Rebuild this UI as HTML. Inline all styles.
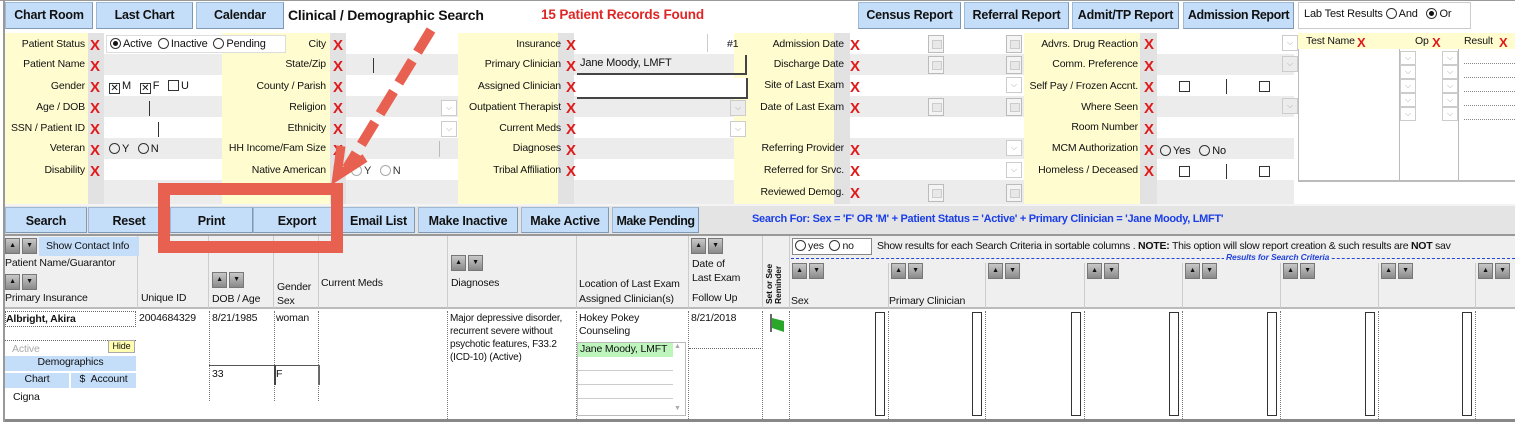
<!DOCTYPE html>
<html><head><meta charset="utf-8"><style>
*{box-sizing:border-box;margin:0;padding:0}
body{width:1515px;height:422px;overflow:hidden;background:#fff;font-family:"Liberation Sans",Arial,sans-serif;font-size:10.5px;letter-spacing:-0.15px;color:#111;position:relative;white-space:nowrap}
.a{position:absolute}
.btn{position:absolute;background:#c4defa;border:1px solid #9fb8d4;border-right-color:#7f98b4;border-bottom-color:#7f98b4;font-weight:bold;font-size:12.5px;letter-spacing:-0.2px;text-align:center;color:#111;white-space:nowrap;overflow:hidden}
.lab{position:absolute;background:#fffdd0}
.xs{position:absolute;background:#e2e2e2}
.l{position:absolute;text-align:right;font-size:10.5px}
.x{position:absolute;color:#e01a1a;font-weight:bold;font-size:15px;line-height:15px}
.rad{display:inline-block;width:11px;height:11px;border:1px solid #333;border-radius:50%;vertical-align:-2px;margin-right:2px;position:relative}
.rad.on::after{content:"";position:absolute;left:2px;top:2px;width:5px;height:5px;border-radius:50%;background:#111}
.cb{display:inline-block;width:11px;height:11px;border:1px solid #333;vertical-align:-2px;margin-right:2px;font-size:10px;line-height:9px;text-align:center}
.dd{position:absolute;width:16px;height:16px;border:1px solid #ccc;background:#fff;color:#aaa;font-size:8px;text-align:center;line-height:14px}
.cal{position:absolute;width:16px;height:18px;border:1px solid #bbb;background:#f4f4f4}
.cal::after{content:"";position:absolute;left:3px;top:4px;width:8px;height:7px;border:1px solid #ccc;background:#e8e8e8}
.ar{position:absolute;width:15px;height:16px;background:linear-gradient(#c8c8c8,#8a8a8a);border:1px solid #777;color:#111;font-size:7px;text-align:center;line-height:14px}
.h{position:absolute;font-size:10.5px;color:#111}
.vl{position:absolute;border-left:1px solid #ccc}
.sb{position:absolute;width:10px;border:1px solid #333;background:#fff}
</style></head><body>
<!-- top bar -->
<div class="a" style="left:0;top:0;width:1515px;height:32px;background:#fff;border-top:1px solid #999"></div>
<div class="a" style="left:3px;top:0;width:2px;height:422px;background:#999"></div>
<div class="btn" style="left:5px;top:2px;width:88px;height:27px;line-height:25px">Chart Room</div>
<div class="btn" style="left:96px;top:2px;width:97px;height:27px;line-height:25px">Last Chart</div>
<div class="btn" style="left:196px;top:2px;width:88px;height:27px;line-height:25px">Calendar</div>
<div class="a" style="left:288px;top:7px;font-size:14px;font-weight:bold;letter-spacing:-0.2px">Clinical / Demographic Search</div>
<div class="a" style="left:541px;top:7px;font-size:13.5px;font-weight:bold;color:#e02525">15 Patient Records Found</div>
<div class="btn" style="left:858px;top:2px;width:103px;height:27px;line-height:25px">Census Report</div>
<div class="btn" style="left:964px;top:2px;width:105px;height:27px;line-height:25px">Referral Report</div>
<div class="btn" style="left:1072px;top:2px;width:107px;height:27px;line-height:25px">Admit/TP Report</div>
<div class="btn" style="left:1183px;top:2px;width:111px;height:27px;line-height:25px;letter-spacing:-0.4px">Admission Report</div>
<div class="a" style="left:1298px;top:2px;width:173px;height:27px;border:1px solid #ccc;padding:5px 0 0 5px;font-size:11px">Lab Test Results <span class="rad"></span>And &nbsp;&nbsp;<span class="rad on"></span>Or</div>

<!-- form rows -->
<div class="a" style="left:104px;top:33px;width:1190px;height:21px;background:#fff"></div>
<div class="a" style="left:104px;top:54px;width:1190px;height:21px;background:#ececec"></div>
<div class="a" style="left:104px;top:75px;width:1190px;height:21px;background:#fff"></div>
<div class="a" style="left:104px;top:96px;width:1190px;height:21px;background:#ececec"></div>
<div class="a" style="left:104px;top:117px;width:1190px;height:21px;background:#fff"></div>
<div class="a" style="left:104px;top:138px;width:1190px;height:21px;background:#ececec"></div>
<div class="a" style="left:104px;top:159px;width:1190px;height:21px;background:#fff"></div>
<div class="a" style="left:104px;top:180px;width:1190px;height:24px;background:#ececec"></div>

<div class="lab" style="left:5px;top:33px;width:83px;height:171px"></div>
<div class="xs" style="left:88px;top:33px;width:16px;height:171px"></div>
<div class="lab" style="left:222px;top:33px;width:108px;height:171px"></div>
<div class="xs" style="left:330px;top:33px;width:16px;height:171px"></div>
<div class="lab" style="left:458px;top:33px;width:100px;height:171px"></div>
<div class="xs" style="left:558px;top:33px;width:16px;height:171px"></div>
<div class="lab" style="left:734px;top:33px;width:100px;height:171px"></div>
<div class="xs" style="left:834px;top:33px;width:16px;height:171px"></div>
<div class="lab" style="left:1024px;top:33px;width:116px;height:171px"></div>
<div class="xs" style="left:1140px;top:33px;width:17px;height:171px"></div>
<div class="a" style="left:1295px;top:33px;width:220px;height:171px;background:#fff"></div>

<!-- col1 labels -->
<div class="l" style="left:5px;width:80px;top:38px">Patient Status</div>
<div class="l" style="left:5px;width:80px;top:58px">Patient Name</div>
<div class="l" style="left:5px;width:80px;top:80px">Gender</div>
<div class="l" style="left:5px;width:80px;top:101px">Age / DOB</div>
<div class="l" style="left:5px;width:80px;top:122px">SSN / Patient ID</div>
<div class="l" style="left:5px;width:80px;top:142px">Veteran</div>
<div class="l" style="left:5px;width:80px;top:164px">Disability</div>
<div class="x" style="left:90px;top:38px">X</div><div class="x" style="left:90px;top:59px">X</div><div class="x" style="left:90px;top:80px">X</div><div class="x" style="left:90px;top:101px">X</div><div class="x" style="left:90px;top:122px">X</div><div class="x" style="left:90px;top:143px">X</div><div class="x" style="left:90px;top:164px">X</div>
<div class="a" style="left:106px;top:35px;width:180px;height:18px;background:#fff;border:1px solid #ddd;padding:2px 3px;font-size:11px"><span class="rad on"></span>Active &nbsp;<span class="rad"></span>Inactive &nbsp;<span class="rad"></span>Pending</div>
<div class="a" style="left:109px;top:80px;font-size:11px"><span class="cb">✕</span>M &nbsp;&nbsp;<span class="cb">✕</span>F &nbsp;&nbsp;<span class="cb"></span>U</div>
<div class="a" style="left:149px;top:101px;width:1px;height:15px;background:#333"></div>
<div class="a" style="left:158px;top:122px;width:1px;height:15px;background:#333"></div>
<div class="a" style="left:109px;top:143px;font-size:11px"><span class="rad"></span>Y &nbsp;&nbsp;<span class="rad"></span>N</div>

<!-- col2 -->
<div class="l" style="left:222px;width:104px;top:38px">City</div>
<div class="l" style="left:222px;width:104px;top:58px">State/Zip</div>
<div class="l" style="left:222px;width:104px;top:80px">County / Parish</div>
<div class="l" style="left:222px;width:104px;top:101px">Religion</div>
<div class="l" style="left:222px;width:104px;top:122px">Ethnicity</div>
<div class="l" style="left:222px;width:104px;top:142px">HH Income/Fam Size</div>
<div class="l" style="left:222px;width:104px;top:164px">Native American</div>
<div class="x" style="left:333px;top:38px">X</div><div class="x" style="left:333px;top:59px">X</div><div class="x" style="left:333px;top:80px">X</div><div class="x" style="left:333px;top:101px">X</div><div class="x" style="left:333px;top:122px">X</div><div class="x" style="left:333px;top:143px">X</div><div class="x" style="left:333px;top:164px">X</div>
<div class="a" style="left:373px;top:58px;width:1px;height:15px;background:#333"></div>
<div class="dd" style="left:441px;top:100px">⌵</div><div class="dd" style="left:441px;top:121px">⌵</div>
<div class="a" style="left:439px;top:141px;width:1px;height:16px;background:#bbb"></div>
<div class="a" style="left:351px;top:165px;font-size:11px;color:#333"><span class="rad" style="border-color:#aaa"></span>Y &nbsp;&nbsp;<span class="rad" style="border-color:#aaa"></span>N</div>

<!-- col3 -->
<div class="l" style="left:458px;width:103px;top:38px">Insurance</div>
<div class="l" style="left:458px;width:103px;top:58px">Primary Clinician</div>
<div class="l" style="left:458px;width:103px;top:80px">Assigned Clinician</div>
<div class="l" style="left:458px;width:103px;top:101px">Outpatient Therapist</div>
<div class="l" style="left:458px;width:103px;top:122px">Current Meds</div>
<div class="l" style="left:458px;width:103px;top:142px">Diagnoses</div>
<div class="l" style="left:458px;width:103px;top:164px">Tribal Affiliation</div>
<div class="x" style="left:566px;top:38px">X</div><div class="x" style="left:566px;top:59px">X</div><div class="x" style="left:566px;top:80px">X</div><div class="x" style="left:566px;top:101px">X</div><div class="x" style="left:566px;top:122px">X</div><div class="x" style="left:566px;top:143px">X</div><div class="x" style="left:566px;top:164px">X</div>
<div class="a" style="left:707px;top:34px;width:1px;height:18px;background:#ccc"></div>
<div class="a" style="left:727px;top:38px">#1</div>
<div class="a" style="left:577px;top:55px;width:170px;height:20px;border-right:2px solid #444;border-bottom:2px solid #444;padding:2px 3px;font-size:11px">Jane Moody, LMFT</div>
<div class="a" style="left:577px;top:78px;width:171px;height:21px;background:#fff;border-right:2px solid #444;border-bottom:2px solid #444"></div>
<div class="dd" style="left:730px;top:100px;background:#ececec">⌵</div><div class="dd" style="left:730px;top:121px">⌵</div>

<!-- col4 -->
<div class="l" style="left:734px;width:110px;top:38px">Admission Date</div>
<div class="l" style="left:734px;width:110px;top:58px">Discharge Date</div>
<div class="l" style="left:734px;width:110px;top:79px">Site of Last Exam</div>
<div class="l" style="left:734px;width:110px;top:101px">Date of Last Exam</div>
<div class="l" style="left:734px;width:110px;top:142px">Referring Provider</div>
<div class="l" style="left:734px;width:110px;top:164px">Referred for Srvc.</div>
<div class="l" style="left:734px;width:110px;top:186px">Reviewed Demog.</div>
<div class="x" style="left:850px;top:38px">X</div><div class="x" style="left:850px;top:59px">X</div><div class="x" style="left:850px;top:80px">X</div><div class="x" style="left:850px;top:101px">X</div><div class="x" style="left:850px;top:143px">X</div><div class="x" style="left:850px;top:164px">X</div><div class="x" style="left:850px;top:186px">X</div>
<div class="cal" style="left:928px;top:35px"></div><div class="cal" style="left:928px;top:56px"></div><div class="cal" style="left:928px;top:98px"></div><div class="cal" style="left:928px;top:184px"></div>
<div class="cal" style="left:1006px;top:35px"></div><div class="cal" style="left:1006px;top:56px"></div><div class="dd" style="left:1006px;top:77px">⌵</div><div class="cal" style="left:1006px;top:98px"></div><div class="dd" style="left:1006px;top:140px">⌵</div><div class="dd" style="left:1006px;top:162px">⌵</div><div class="cal" style="left:1006px;top:184px"></div>

<!-- col5 -->
<div class="l" style="left:1024px;width:114px;top:38px">Advrs. Drug Reaction</div>
<div class="l" style="left:1024px;width:114px;top:58px">Comm. Preference</div>
<div class="l" style="left:1024px;width:114px;top:80px">Self Pay / Frozen Accnt.</div>
<div class="l" style="left:1024px;width:114px;top:101px">Where Seen</div>
<div class="l" style="left:1024px;width:114px;top:121px">Room Number</div>
<div class="l" style="left:1024px;width:114px;top:142px">MCM Authorization</div>
<div class="l" style="left:1024px;width:114px;top:164px">Homeless / Deceased</div>
<div class="x" style="left:1144px;top:37px">X</div><div class="x" style="left:1144px;top:59px">X</div><div class="x" style="left:1144px;top:80px">X</div><div class="x" style="left:1144px;top:101px">X</div><div class="x" style="left:1144px;top:122px">X</div><div class="x" style="left:1144px;top:143px">X</div><div class="x" style="left:1144px;top:164px">X</div>
<div class="a" style="left:1179px;top:81px"><span class="cb"></span></div><div class="a" style="left:1226px;top:79px;width:1px;height:15px;background:#333"></div><div class="a" style="left:1259px;top:81px"><span class="cb"></span></div>
<div class="a" style="left:1179px;top:166px"><span class="cb"></span></div><div class="a" style="left:1226px;top:164px;width:1px;height:15px;background:#333"></div><div class="a" style="left:1259px;top:166px"><span class="cb"></span></div>
<div class="a" style="left:1160px;top:145px;font-size:11px"><span class="rad"></span>Yes &nbsp;&nbsp;<span class="rad"></span>No</div>
<div class="dd" style="left:1282px;top:35px">⌵</div><div class="dd" style="left:1282px;top:56px;background:#ececec">⌵</div><div class="dd" style="left:1282px;top:98px;background:#ececec">⌵</div>

<!-- lab box -->
<div class="a" style="left:1298px;top:33px;width:217px;height:149px;border-left:1px solid #bbb;border-bottom:2px solid #bbb"></div>
<div class="a" style="left:1298px;top:33px;width:217px;height:16px;background:#fffdd0"></div>
<div class="a" style="left:1306px;top:35px">Test Name</div><div class="x" style="left:1357px;top:35px;font-size:13px">X</div>
<div class="a" style="left:1415px;top:35px">Op</div><div class="x" style="left:1432px;top:35px;font-size:13px">X</div>
<div class="a" style="left:1464px;top:35px">Result</div><div class="x" style="left:1499px;top:35px;font-size:13px">X</div>
<div class="vl" style="left:1399px;top:49px;height:132px;border-color:#bbb"></div>
<div class="vl" style="left:1458px;top:49px;height:132px;border-color:#bbb"></div>
<div class="dd" style="left:1400px;top:51px;height:14px;line-height:12px">⌵</div><div class="dd" style="left:1400px;top:65px;height:14px;line-height:12px">⌵</div><div class="dd" style="left:1400px;top:79px;height:14px;line-height:12px">⌵</div><div class="dd" style="left:1400px;top:93px;height:14px;line-height:12px">⌵</div><div class="dd" style="left:1400px;top:107px;height:14px;line-height:12px">⌵</div>
<div class="dd" style="left:1442px;top:51px;height:14px;line-height:12px">⌵</div><div class="dd" style="left:1442px;top:65px;height:14px;line-height:12px">⌵</div><div class="dd" style="left:1442px;top:79px;height:14px;line-height:12px">⌵</div><div class="dd" style="left:1442px;top:93px;height:14px;line-height:12px">⌵</div><div class="dd" style="left:1442px;top:107px;height:14px;line-height:12px">⌵</div>
<div class="a" style="left:1464px;top:63px;width:51px;border-top:1px dotted #888"></div><div class="a" style="left:1464px;top:77px;width:51px;border-top:1px dotted #888"></div><div class="a" style="left:1464px;top:91px;width:51px;border-top:1px dotted #888"></div><div class="a" style="left:1464px;top:105px;width:51px;border-top:1px dotted #888"></div><div class="a" style="left:1464px;top:119px;width:51px;border-top:1px dotted #888"></div>

<!-- button bar -->
<div class="a" style="left:5px;top:204px;width:1510px;height:32px;background:#e4e4e4;border-top:2px solid #f4f4f4;border-bottom:2px solid #999"></div>
<div class="btn" style="left:5px;top:207px;width:82px;height:26px;line-height:26px">Search</div>
<div class="btn" style="left:88px;top:207px;width:82px;height:26px;line-height:26px">Reset</div>
<div class="btn" style="left:170px;top:207px;width:83px;height:26px;line-height:26px">Print</div>
<div class="btn" style="left:253px;top:207px;width:88px;height:26px;line-height:26px">Export</div>
<div class="btn" style="left:342px;top:207px;width:73px;height:26px;line-height:26px">Email List</div>
<div class="btn" style="left:418px;top:207px;width:100px;height:26px;line-height:26px">Make Inactive</div>
<div class="btn" style="left:521px;top:207px;width:88px;height:26px;line-height:26px">Make Active</div>
<div class="btn" style="left:612px;top:207px;width:87px;height:26px;line-height:26px;letter-spacing:-0.5px">Make Pending</div>
<div class="a" style="left:752px;top:213px;font-size:11px;font-weight:bold;color:#1a3ee8;letter-spacing:-0.3px">Search For: Sex = 'F' OR 'M' + Patient Status = 'Active' + Primary Clinician = 'Jane Moody, LMFT'</div>

<!-- results header -->
<div class="a" style="left:5px;top:236px;width:1510px;height:73px;background:#efefef;border-bottom:2px solid #bbb"></div>
<div class="vl" style="left:137px;top:236px;height:72px"></div><div class="vl" style="left:208px;top:236px;height:72px"></div><div class="vl" style="left:273px;top:236px;height:72px"></div><div class="vl" style="left:318px;top:236px;height:72px"></div><div class="vl" style="left:447px;top:236px;height:72px"></div><div class="vl" style="left:576px;top:236px;height:72px"></div><div class="vl" style="left:688px;top:236px;height:72px"></div><div class="vl" style="left:762px;top:236px;height:72px"></div><div class="vl" style="left:789px;top:236px;height:72px"></div>
<div class="vl" style="left:888px;top:263px;height:45px"></div><div class="vl" style="left:985px;top:263px;height:45px"></div><div class="vl" style="left:1084px;top:263px;height:45px"></div><div class="vl" style="left:1182px;top:263px;height:45px"></div><div class="vl" style="left:1280px;top:263px;height:45px"></div><div class="vl" style="left:1378px;top:263px;height:45px"></div><div class="vl" style="left:1475px;top:263px;height:45px"></div>
<div class="ar" style="left:5px;top:238px">▲</div><div class="ar" style="left:22px;top:238px">▼</div>
<div class="a" style="left:39px;top:237px;width:100px;height:19px;background:#c4defa;padding:3px 0 0 7px">Show Contact Info</div>
<div class="h" style="left:5px;top:257px">Patient Name/Guarantor</div>
<div class="ar" style="left:5px;top:274px">▲</div><div class="ar" style="left:22px;top:274px">▼</div>
<div class="h" style="left:5px;top:292px">Primary Insurance</div>
<div class="h" style="left:141px;top:292px">Unique ID</div>
<div class="ar" style="left:212px;top:272px">▲</div><div class="ar" style="left:229px;top:272px">▼</div>
<div class="h" style="left:212px;top:293px">DOB / Age</div>
<div class="h" style="left:277px;top:280px;line-height:14px">Gender<br>Sex</div>
<div class="h" style="left:321px;top:277px">Current Meds</div>
<div class="ar" style="left:451px;top:255px">▲</div><div class="ar" style="left:468px;top:255px">▼</div>
<div class="h" style="left:451px;top:277px">Diagnoses</div>
<div class="h" style="left:579px;top:277px;line-height:15px">Location of Last Exam<br>Assigned Clinician(s)</div>
<div class="ar" style="left:691px;top:238px">▲</div><div class="ar" style="left:708px;top:238px">▼</div>
<div class="h" style="left:692px;top:257px;line-height:14px">Date of<br>Last Exam</div>
<div class="h" style="left:692px;top:292px">Follow Up</div>
<div class="a" style="left:765px;top:304px;transform:rotate(-90deg);transform-origin:0 0;font-size:8.5px;font-weight:bold;line-height:9px;width:70px">Set or See<br>Reminder</div>
<div class="a" style="left:792px;top:238px;width:80px;height:17px;background:#fff;border:1px solid #888;padding:1px 2px"><span class="rad"></span>yes &nbsp;<span class="rad"></span>no</div>
<div class="h" style="left:877px;top:240px;letter-spacing:-0.25px">Show results for each Search Criteria in sortable columns . <b>NOTE:</b> This option will slow report creation &amp; such results are <b>NOT</b> sav</div>
<div class="a" style="left:791px;top:258px;width:724px;border-top:1px dashed #2244dd"></div>
<div class="a" style="left:1224px;top:252px;background:#efefef;color:#2244dd;font-size:8.5px;font-style:italic;font-weight:bold;padding:0 2px">Results for Search Criteria</div>
<div class="ar" style="left:792px;top:263px">▲</div><div class="ar" style="left:809px;top:263px">▼</div>
<div class="ar" style="left:891px;top:263px">▲</div><div class="ar" style="left:908px;top:263px">▼</div>
<div class="ar" style="left:988px;top:263px">▲</div><div class="ar" style="left:1005px;top:263px">▼</div>
<div class="ar" style="left:1087px;top:263px">▲</div><div class="ar" style="left:1104px;top:263px">▼</div>
<div class="ar" style="left:1185px;top:263px">▲</div><div class="ar" style="left:1202px;top:263px">▼</div>
<div class="ar" style="left:1283px;top:263px">▲</div><div class="ar" style="left:1300px;top:263px">▼</div>
<div class="ar" style="left:1381px;top:263px">▲</div><div class="ar" style="left:1398px;top:263px">▼</div>
<div class="ar" style="left:1478px;top:263px">▲</div><div class="ar" style="left:1495px;top:263px">▼</div>
<div class="h" style="left:791px;top:295px">Sex</div>
<div class="h" style="left:889px;top:295px">Primary Clinician</div>

<!-- data row -->
<div class="a" style="left:5px;top:419px;width:1510px;height:3px;background:#888"></div>
<div class="a" style="left:5px;top:311px;width:131px;height:16px;border:1px dotted #666;font-weight:bold;padding:1px 0 0 0">Albright, Akira</div>
<div class="a" style="left:5px;top:327px;width:131px;height:14px;border-bottom:1px dotted #666"></div>
<div class="a" style="left:12px;top:343px;color:#aaa">Active</div>
<div class="a" style="left:108px;top:340px;width:27px;height:13px;background:#fffdb0;border:1px solid #aaa;font-size:9px;text-align:center">Hide</div>
<div class="a" style="left:5px;top:356px;width:131px;height:15px;background:#c4defa;text-align:center">Demographics</div>
<div class="a" style="left:5px;top:373px;width:64px;height:15px;background:#c4defa;text-align:center">Chart</div>
<div class="a" style="left:71px;top:373px;width:65px;height:15px;background:#c4defa;text-align:center">$ &nbsp;Account</div>
<div class="a" style="left:13px;top:391px">Cigna</div>
<div class="a" style="left:139px;top:312px">2004684329</div>
<div class="a" style="left:212px;top:312px">8/21/1985</div>
<div class="a" style="left:209px;top:311px;height:90px;border-left:1px dotted #777"></div>
<div class="a" style="left:209px;top:365px;width:109px;border-top:1px solid #555"></div>
<div class="a" style="left:212px;top:368px">33</div>
<div class="a" style="left:274px;top:311px;height:90px;border-left:1px dotted #777"></div>
<div class="a" style="left:276px;top:312px">woman</div>
<div class="a" style="left:274px;top:365px;height:20px;border-left:2px solid #444"></div>
<div class="a" style="left:276px;top:368px">F</div>
<div class="a" style="left:318px;top:365px;height:20px;border-left:2px solid #666"></div>
<div class="a" style="left:318px;top:311px;height:90px;border-left:1px dotted #777"></div>
<div class="a" style="left:447px;top:311px;height:108px;border-left:1px dotted #777"></div>
<div class="a" style="left:450px;top:312px;line-height:13px;font-size:10px;letter-spacing:-0.2px">Major depressive disorder,<br>recurrent severe without<br>psychotic features, F33.2<br>(ICD-10) (Active)</div>
<div class="a" style="left:576px;top:311px;height:108px;border-left:1px dotted #777"></div>
<div class="a" style="left:579px;top:312px;line-height:13px">Hokey Pokey<br>Counseling</div>
<div class="a" style="left:577px;top:342px;width:109px;height:74px;border:1px solid #bbb;background:#fff"></div>
<div class="a" style="left:578px;top:343px;width:95px;height:14px;background:#bdf5bd;padding-left:2px;overflow:hidden">Jane Moody, LMFT</div>
<div class="a" style="left:578px;top:370px;width:95px;border-top:1px solid #ccc"></div><div class="a" style="left:578px;top:384px;width:95px;border-top:1px solid #ccc"></div><div class="a" style="left:578px;top:398px;width:95px;border-top:1px solid #ccc"></div>
<div class="a" style="left:674px;top:343px;color:#aaa;font-size:7px">▲</div><div class="a" style="left:674px;top:405px;color:#aaa;font-size:7px">▼</div>
<div class="a" style="left:688px;top:311px;height:108px;border-left:1px dotted #777"></div>
<div class="a" style="left:691px;top:312px">8/21/2018</div>
<div class="a" style="left:689px;top:348px;width:72px;border-top:1px dotted #666"></div>
<div class="a" style="left:762px;top:311px;height:108px;border-left:1px dotted #777"></div>
<svg class="a" style="left:768px;top:312px" width="18" height="22"><line x1="3" y1="2" x2="3" y2="20" stroke="#666" stroke-width="2"/><path d="M4 6 L16 9 L16 20 L4 16Z" fill="#2aa62a"/></svg>
<div class="a" style="left:789px;top:311px;height:108px;border-left:1px dotted #777"></div>
<div class="a" style="left:888px;top:311px;height:108px;border-left:1px dotted #777"></div><div class="a" style="left:985px;top:311px;height:108px;border-left:1px dotted #777"></div><div class="a" style="left:1084px;top:311px;height:108px;border-left:1px dotted #777"></div><div class="a" style="left:1182px;top:311px;height:108px;border-left:1px dotted #777"></div><div class="a" style="left:1280px;top:311px;height:108px;border-left:1px dotted #777"></div><div class="a" style="left:1378px;top:311px;height:108px;border-left:1px dotted #777"></div><div class="a" style="left:1475px;top:311px;height:108px;border-left:1px dotted #777"></div>
<div class="sb" style="left:875px;top:312px;height:104px"></div><div class="sb" style="left:972px;top:312px;height:104px"></div><div class="sb" style="left:1071px;top:312px;height:104px"></div><div class="sb" style="left:1169px;top:312px;height:104px"></div><div class="sb" style="left:1267px;top:312px;height:104px"></div><div class="sb" style="left:1365px;top:312px;height:104px"></div><div class="sb" style="left:1462px;top:312px;height:104px"></div>

<!-- annotation -->
<svg class="a" style="left:0;top:0" width="1515" height="422">
<rect x="164" y="189" width="173" height="58" fill="none" stroke="#e86050" stroke-width="12"/>
<line x1="431" y1="30" x2="347" y2="168" stroke="#e86050" stroke-width="10" stroke-dasharray="26 10"/>
<polyline points="341,146 337,176 365,158" fill="none" stroke="#e86050" stroke-width="9" stroke-linejoin="miter"/>
</svg>
</body></html>
